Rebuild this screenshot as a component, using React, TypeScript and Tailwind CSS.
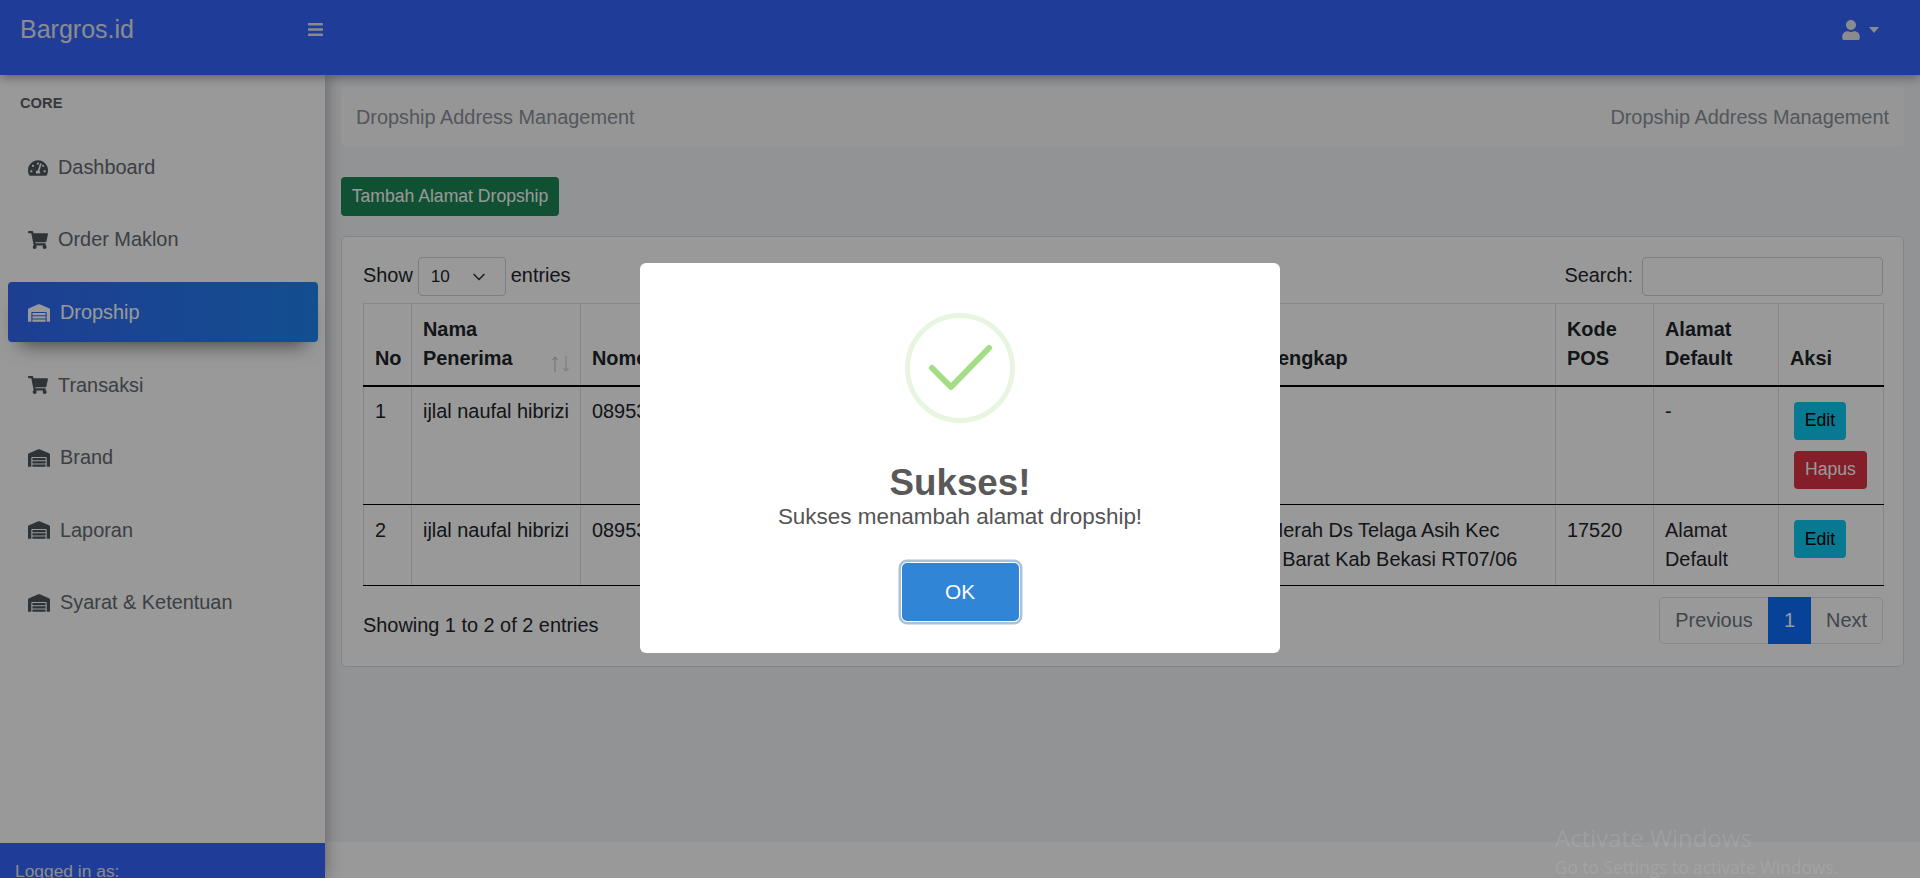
import { FaBars, FaShoppingCart, FaTachometerAlt, FaUser, FaWarehouse } from 'react-icons/fa';
import { ChevronDown } from 'lucide-react';
import React from 'react';

const menu = [
  { label: 'Dashboard', icon: <FaTachometerAlt className="w-5 h-5" /> },
  { label: 'Order Maklon', icon: <FaShoppingCart className="w-5 h-5" /> },
  { label: 'Dropship', icon: <FaWarehouse className="w-[22px] h-[18px]" />, active: true },
  { label: 'Transaksi', icon: <FaShoppingCart className="w-5 h-5" /> },
  { label: 'Brand', icon: <FaWarehouse className="w-[22px] h-[18px]" /> },
  { label: 'Laporan', icon: <FaWarehouse className="w-[22px] h-[18px]" /> },
  { label: 'Syarat & Ketentuan', icon: <FaWarehouse className="w-[22px] h-[18px]" /> },
];

const th = 'border border-[#dee2e6] border-b-2 border-b-black px-[11px] py-[11px] text-left align-bottom font-bold';
const td = 'border border-[#dee2e6] border-b-black px-[11px] py-[10.5px] align-top';

const SortIcon = () => (
  <svg viewBox="0 0 20 18" className="w-5 h-[18px] mb-[1px] -mr-[2px]" fill="none" strokeWidth="1.1">
    <path d="M4 17V2M1.5 5L4 2l2.5 3" stroke="#c4c4c4" />
    <path d="M15 1v15M12.5 13l2.5 3 2.5-3" stroke="#d0d0d0" />
  </svg>
);

const App = () => {
  return (
    <div className="h-screen overflow-hidden flex flex-col text-[19.9px] leading-[29.4px] text-[#212529] font-['Liberation_Sans',Arial,sans-serif]">
      <nav className="relative z-20 h-[75px] shrink-0 bg-[#3464fd] flex items-start shadow-[0_2px_10px_rgba(0,0,0,0.4)]">
        <div className="h-[59px] w-full flex items-center pl-5 pr-[41px]">
          <span className="text-[25px] text-[#e6e8ee] w-[288px]">Bargros.id</span>
          <FaBars className="w-[15px] h-[17px] text-[#e6e8ee]" />
          <div className="ml-auto flex items-center gap-[9px] text-[#e6e8ee]">
            <FaUser className="w-[18px] h-5" />
            <span className="w-0 h-0 border-x-[5px] border-x-transparent border-t-[6px] border-t-[#e6e8ee]" />
          </div>
        </div>
      </nav>

      <div className="flex-1 flex min-h-0">
        <aside className="relative z-10 w-[325px] shrink-0 bg-white flex flex-col shadow-[2px_0_14px_rgba(0,0,0,0.3)]">
          <div className="pl-5 pt-[18px] text-[14.7px] leading-5 font-bold text-[#5a5f64]">CORE</div>
          <ul className="mt-6 pl-2 pr-[7px] flex flex-col gap-[12.6px]">
            {menu.map((m) => (
              <li
                key={m.label}
                className={
                  m.active
                    ? 'h-[60px] pl-5 pt-px flex items-center gap-[10px] rounded-[4px] text-white bg-gradient-to-r from-[#3268f5] to-[#1f83f0] shadow-[0_14px_20px_-12px_rgba(0,0,0,0.6)]'
                    : 'h-[60px] pl-5 pt-px flex items-center gap-[10px] rounded-[4px] text-[#646a70]'
                }
              >
                <span className={m.active ? 'text-white' : 'text-[#4e555c]'}>{m.icon}</span>
                {m.label}
              </li>
            ))}
          </ul>
          <div className="mt-auto h-[35px] overflow-hidden bg-[#3464fd] pl-[15px] pt-[17px] text-[17.4px] leading-[22px] text-[#e6e8ee]">
            Logged in as:
          </div>
        </aside>

        <main className="flex-1 min-w-0 flex flex-col bg-[#f3f5f8]">
          <div className="flex-1 px-4 pt-3">
            <div className="h-[60px] rounded-[5px] bg-[#fbfbfb] px-[15px] pt-px flex items-center justify-between text-[#8a9198]">
              <span>Dropship Address Management</span>
              <span>Dropship Address Management</span>
            </div>

            <button className="mt-[30px] block h-[39px] w-[218px] rounded-[4px] bg-[#198754] text-[17.6px] text-white text-center">
              Tambah Alamat Dropship
            </button>

            <div className="mt-5 h-[431px] rounded-[5px] border border-[#dcdee0] bg-white pt-5 pl-[21px] pr-5">
              <div className="flex justify-between items-center h-[39px]">
                <div className="flex items-center">
                  <span className="-mt-[2px]">Show</span>
                  <div className="mx-[5px] w-[88px] h-[39px] border border-[#ced4da] rounded-[4px] flex items-center justify-between pl-3 pr-5 text-[17.15px]">
                    10
                    <ChevronDown className="w-5 h-5 -mr-[4px] text-[#343a40]" strokeWidth={2} />
                  </div>
                  <span className="-mt-[2px]">entries</span>
                </div>
                <div className="flex items-center">
                  <span className="-mt-[2px]">Search:</span>
                  <div className="ml-[9px] w-[241px] h-[39px] border border-[#ced4da] rounded-[4px]" />
                </div>
              </div>

              <table className="mt-[7px] w-full table-fixed border-collapse">
                <colgroup>
                  <col className="w-[48px]" />
                  <col className="w-[169px]" />
                  <col className="w-[605px]" />
                  <col className="w-[370px]" />
                  <col className="w-[98px]" />
                  <col className="w-[125px]" />
                  <col className="w-[105px]" />
                </colgroup>
                <thead>
                  <tr className="h-[82px]">
                    <th className={th}>No</th>
                    <th className={th}>
                      Nama
                      <div className="flex items-end justify-between">
                        Penerima
                        <SortIcon />
                      </div>
                    </th>
                    <th className={th}>Nomor</th>
                    <th className={`${th} pl-[8px]`}>Alamat Lengkap</th>
                    <th className={th}>Kode POS</th>
                    <th className={th}>Alamat Default</th>
                    <th className={th}>Aksi</th>
                  </tr>
                </thead>
                <tbody>
                  <tr className="h-[119px]">
                    <td className={td}>1</td>
                    <td className={td}>ijlal naufal hibrizi</td>
                    <td className={td}>08953</td>
                    <td className={td}></td>
                    <td className={td}></td>
                    <td className={td}>-</td>
                    <td className={td}>
                      <div className="pl-1 pt-[4.5px] flex flex-col items-start gap-[11px]">
                        <button className="h-[38px] w-[52px] rounded-[4px] bg-[#0dcaf0] text-[17.6px] text-black">Edit</button>
                        <button className="h-[38px] w-[73px] rounded-[4px] bg-[#dc3545] text-[17.6px] text-white">Hapus</button>
                      </div>
                    </td>
                  </tr>
                  <tr className="h-[80px]">
                    <td className={td}>2</td>
                    <td className={td}>ijlal naufal hibrizi</td>
                    <td className={td}>08953</td>
                    <td className={td}>Jl Bukit Merah Ds Telaga Asih Kec Cikarang Barat Kab Bekasi RT07/06</td>
                    <td className={td}>17520</td>
                    <td className={td}>Alamat Default</td>
                    <td className={td}>
                      <div className="pl-1 pt-[4.5px] flex flex-col items-start">
                        <button className="h-[38px] w-[52px] rounded-[4px] bg-[#0dcaf0] text-[17.6px] text-black">Edit</button>
                      </div>
                    </td>
                  </tr>
                </tbody>
              </table>

              <div className="mt-[11px] flex justify-between items-start">
                <span className="mt-[14px]">Showing 1 to 2 of 2 entries</span>
                <div className="flex h-[47px] w-[224px] rounded-[5px] border border-[#dee2e6] text-[#6c757d]">
                  <span className="w-[108px] flex items-center justify-center">Previous</span>
                  <span className="-my-px w-[43px] flex items-center justify-center bg-[#0d6efd] text-white">1</span>
                  <span className="flex-1 flex items-center justify-center">Next</span>
                </div>
              </div>
            </div>
          </div>
          <footer className="h-9 shrink-0 bg-white" />
        </main>
      </div>

      {/* sweetalert overlay */}
      <div className="fixed inset-0 z-30 bg-black/40 flex justify-center items-start pt-[263px]">
        <div className="w-[640px] h-[390px] rounded-[6px] bg-white flex flex-col items-center pt-[50px]">
          <div className="w-[110px] h-[110px] rounded-full border-[5px] border-[#e8f5e1] flex items-center justify-center">
            <svg viewBox="0 0 100 100" className="w-[100px] h-[100px]" fill="none">
              <path d="M22 50L41 69L79 30" stroke="#a5dc86" strokeWidth="6" strokeLinecap="round" strokeLinejoin="round" />
            </svg>
          </div>
          <h2 className="mt-[38.5px] text-[36.75px] leading-[41px] font-bold text-[#595959]">Sukses!</h2>
          <p className="text-[22.45px] leading-[28px] text-[#545454]">Sukses menambah alamat dropship!</p>
          <button className="mt-[32px] w-[117px] h-[58px] rounded-[5px] bg-[#3085d6] text-[20.8px] text-white shadow-[0_0_0_1px_#ffffff,0_0_0_3.5px_#a9c2dc]">
            OK
          </button>
        </div>
      </div>

      {/* windows watermark */}
      <div className="fixed z-40 left-[1555px] top-[822px] pointer-events-none font-['Open_Sans',sans-serif] text-white/10">
        <div className="text-[24px] leading-8">Activate Windows</div>
        <div className="text-[17.3px] leading-[22px] mt-[3px] whitespace-nowrap">Go to Settings to activate Windows.</div>
      </div>
    </div>
  );
};

export default App;
